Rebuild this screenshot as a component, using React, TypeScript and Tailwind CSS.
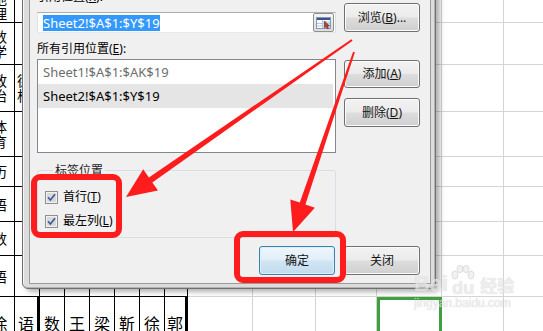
import React from "react";

// spreadsheet behind the dialog
const colW = [
  "w-[15px]", "w-[25px]", "w-[25px]", "w-[25px]", "w-[25px]", "w-[25px]", "w-[25px]",
  "w-[23px]", "w-[65px]", "w-[63px]", "w-[61px]", "w-[65px]", "w-[62px]", "w-[40px]",
];
const rowH = [
  "h-[23px]", "h-[42px]", "h-[47px]", "h-[45px]", "h-[30px]",
  "h-[35px]", "h-[34px]", "h-[41px]", "h-[40px]",
];
const leftLabels = [["地", "理"], ["数", "学"], ["政", "治"], ["体", "育"], ["历"], ["语"], ["数"], ["语"]];
const bottomChars = ["徐", "语", "数", "王", "梁", "靳", "徐", "郭"];

const Sheet: React.FC = () => {
  const last = rowH.length - 1;
  return (
    <div className="flex flex-col font-['Noto_Sans_CJK_SC',sans-serif] text-black">
      {rowH.map((h, r) => (
        <div key={r} className={`flex shrink-0 ${h}`}>
          {colW.map((w, c) => {
            const dark = c < 8;
            const thick = r === last && (c === 1 || c === 7);
            const border = `${thick ? "border-r-[3px]" : "border-r"} border-b ${dark ? "border-black" : "border-[#d4d4d4]"}`;
            if (r === last) {
              return (
                <div
                  key={c}
                  className={`relative shrink-0 ${w} ${border} ${c === 0 ? "overflow-hidden" : ""} flex justify-center pt-[18px] text-[16px] leading-[16px]`}
                >
                  {c < 8 && (
                    <span className={c === 0 ? "-ml-[15px] w-[30px] shrink-0 text-center" : ""}>{bottomChars[c]}</span>
                  )}
                  {c === 11 && (
                    <div className="absolute left-0 top-0 right-[-1px] bottom-0 border-[3px] border-[#3f9f3f]" />
                  )}
                </div>
              );
            }
            return (
              <div
                key={c}
                className={`shrink-0 ${w} ${border} overflow-hidden flex ${r === 0 ? "items-end pb-[1px]" : "items-center"} text-[14px] leading-[15px]`}
              >
                {c === 0 && (
                  <div className="-ml-[15px] w-[30px] shrink-0 flex flex-col items-center">
                    {leftLabels[r].map((ch, i) => (
                      <span key={i}>{ch}</span>
                    ))}
                  </div>
                )}
                {c === 1 && r === 2 && (
                  <div className="ml-[2px] w-[14px] shrink-0 flex flex-col items-center">
                    <span>德</span>
                    <span>析</span>
                  </div>
                )}
              </div>
            );
          })}
        </div>
      ))}
    </div>
  );
};

const btnBase =
  "flex items-center justify-center w-[76px] rounded-[3px] border text-[12px] leading-[16px] text-[#151515]";
const btnNormal =
  "border-[#707070] bg-[linear-gradient(to_bottom,#f2f2f2_0%,#ebebeb_48%,#dddddd_52%,#cfcfcf_100%)] shadow-[inset_0_0_0_1px_#fbfbfb]";
const btnDefault =
  "border-[#3c7fb1] bg-[linear-gradient(to_bottom,#eef6fc_0%,#e1eef8_48%,#d0e5f3_52%,#c2dbed_100%)] shadow-[inset_0_0_0_1px_#d6f1fc]";

const Acc: React.FC<{ k: string }> = ({ k }) => <span className="underline underline-offset-[1px]">{k}</span>;

const CheckBox: React.FC = () => (
  <svg width="13" height="13" viewBox="0 0 13 13" className="shrink-0">
    <rect x="0.5" y="0.5" width="12" height="12" fill="#f1f1f1" stroke="#8e8f8f" />
    <rect x="2" y="2" width="9" height="9" fill="#d9d9d9" />
    <path d="M3 6.3 L5.4 9 L10 3.2" fill="none" stroke="#3f5a9a" strokeWidth="1.7" />
  </svg>
);

const RefIcon: React.FC = () => (
  <svg width="15" height="12" viewBox="0 0 15 12">
    <rect x="0.5" y="0.5" width="14" height="11" fill="#ffffff" stroke="#8797b0" />
    <rect x="1" y="1" width="13" height="2" fill="#3b4f96" />
    <rect x="7" y="4" width="7" height="7" fill="#d3e2f3" />
    <path d="M1 6.5 H14 M1 9 H14 M6.5 3 V11" stroke="#b7c7dc" strokeWidth="1" />
    <path d="M8.5 4 V11 L10.2 9.4 L11.4 12 L12.5 11.5 L11.3 9 H13.5 Z" fill="#b5402e" stroke="#5c1c12" strokeWidth="0.5" />
  </svg>
);

const Dialog: React.FC = () => (
  <div className="absolute left-[22px] top-[-40px] w-[414px] rounded-b-[6px] border border-[#6f6f6f] bg-[#dcdcdc] pl-[6px] pr-[4px] pt-[9px] pb-[4px] shadow-[inset_1px_1px_0_#f7f7f7,inset_-1px_-1px_0_#b4b4b4,4px_3px_5px_rgba(0,0,0,0.3)]">
    <div className="border border-[#9a9a9a] bg-[#f0f0f0] pl-[7px] pr-[10px] pt-[18px] pb-[8px] text-[12px] leading-[16px] text-black">
      <div className="flex gap-[8px]">
        <div className="flex w-[299px] flex-col">
          <div className="h-[16px]">
            引用位置(<Acc k="R" />):
          </div>
          <div className="mt-[7px] flex h-[21px] items-center border border-[#abadb3] border-b-[#e3e9ef] border-r-[#dbdfe6] border-l-[#e2e3ea] bg-white pl-[5px] pr-[1px]">
            <span className="bg-[#3399ff] text-[13px] leading-[16px] text-white">Sheet2!$A$1:$Y$19</span>
            <div className="ml-auto flex h-[19px] w-[21px] items-center justify-center rounded-[2px] border border-[#8e8f8f] bg-[linear-gradient(to_bottom,#f4f4f4,#dcdcdc)]">
              <RefIcon />
            </div>
          </div>
          <div className="mt-[8px] h-[16px]">
            所有引用位置(<Acc k="E" />):
          </div>
          <div className="mt-[2px] flex h-[94px] flex-col border border-[#828790] bg-white text-[13px]">
            <div className="flex h-[24px] items-center pl-[5px] text-[#6d6d6d]">Sheet1!$A$1:$AK$19</div>
            <div className="mr-[2px] flex h-[24px] items-center bg-[#e5e5e5] pl-[5px] text-black">Sheet2!$A$1:$Y$19</div>
          </div>
          <fieldset className="mt-[10px] rounded-[3px] border border-[#d5dfe5] px-[7px] pb-[4px]">
            <legend className="ml-[8px] px-[2px] leading-[15px] text-[#1e1e1e]">标签位置</legend>
            <div className="flex flex-col pt-[7px]">
              <div className="flex h-[24px] items-center gap-[5px]">
                <CheckBox />
                <span>
                  首行(<Acc k="T" />)
                </span>
              </div>
              <div className="flex h-[24px] items-center gap-[5px]">
                <CheckBox />
                <span>
                  最左列(<Acc k="L" />)
                </span>
              </div>
            </div>
          </fieldset>
        </div>
        <div className="flex w-[76px] flex-col">
          <button className={`${btnBase} ${btnNormal} mt-[14px] h-[29px]`}>
            浏览(<Acc k="B" />)...
          </button>
          <button className={`${btnBase} ${btnNormal} mt-[28px] h-[28px]`}>
            添加(<Acc k="A" />)
          </button>
          <button className={`${btnBase} ${btnNormal} mt-[10px] h-[29px]`}>
            删除(<Acc k="D" />)
          </button>
        </div>
      </div>
      <div className="mt-[8px] flex justify-end gap-[9px]">
        <button className={`${btnBase} ${btnDefault} h-[29px]`}>确定</button>
        <button className={`${btnBase} ${btnNormal} h-[29px]`}>关闭</button>
      </div>
    </div>
  </div>
);

const Watermark: React.FC = () => (
  <div className="pointer-events-none absolute left-[414px] top-[265px] flex flex-col items-start text-[#e6e6e6] opacity-70 [text-shadow:0_0_1px_#c4c4c4]">
    <div className="flex items-end gap-[2px]">
      <span className="font-['Liberation_Sans',sans-serif] text-[22px] font-bold leading-[22px]">Bai</span>
      <div className="flex flex-col items-center">
        <svg width="26" height="16" viewBox="0 0 26 16">
          <g fill="#ececec" stroke="#c8c8c8" strokeWidth="0.8">
            <ellipse cx="5" cy="10" rx="3" ry="4" />
            <ellipse cx="10" cy="4" rx="3" ry="3.6" />
            <ellipse cx="16" cy="4" rx="3" ry="3.6" />
            <ellipse cx="21" cy="10" rx="3" ry="4" />
          </g>
        </svg>
        <span className="font-['Liberation_Sans',sans-serif] text-[18px] font-bold leading-[14px]">du</span>
      </div>
      <span className="ml-[2px] font-['Noto_Sans_CJK_SC',sans-serif] text-[17px] font-bold leading-[20px]">经验</span>
    </div>
    <span className="mt-[1px] font-['Liberation_Sans',sans-serif] text-[12px] leading-[14px]">jingyan.baidu.com</span>
  </div>
);

const Marks: React.FC = () => (
  <svg width="543" height="331" viewBox="0 0 543 331" className="pointer-events-none absolute left-0 top-0">
    <rect x="34" y="177" width="85" height="58" rx="6" fill="none" stroke="#ff1c1c" strokeWidth="6" />
    <rect x="237" y="234" width="106" height="46" rx="6" fill="none" stroke="#ff1c1c" strokeWidth="6" />
    <polygon
      fill="#ff1c1c"
      points="352.6,40.8 152.3,182.4 158,190.6 126,197 143.2,169.2 148.9,177.4 351.4,39.2"
    />
    <polygon
      fill="#ff1c1c"
      points="354.9,52.3 305.4,204.6 314.9,207.8 293,232 290.3,199.4 299.8,202.6 353.1,51.7"
    />
  </svg>
);

export default function App() {
  return (
    <div className="relative h-[331px] w-[543px] overflow-hidden bg-white font-['Noto_Sans','Noto_Sans_CJK_SC',sans-serif]">
      <Sheet />
      <Dialog />
      <Watermark />
      <Marks />
    </div>
  );
}
